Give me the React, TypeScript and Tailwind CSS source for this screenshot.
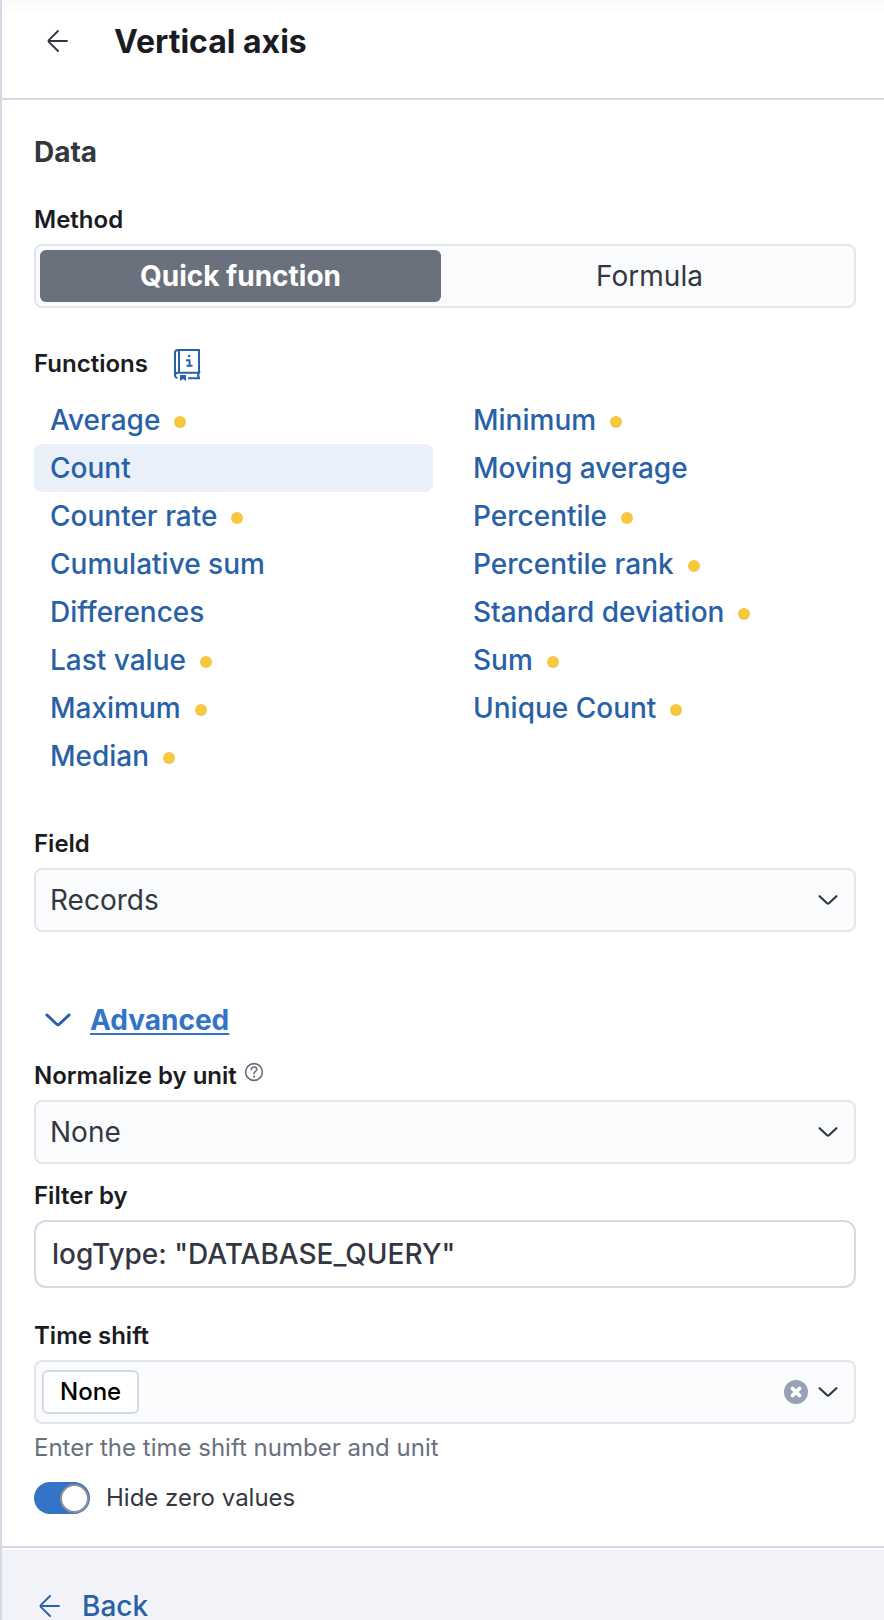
import { useState } from 'react';
import type { ReactNode } from 'react';

type FunctionItem = { name: string; dot?: boolean };

const leftFunctions: FunctionItem[] = [
  { name: 'Average', dot: true },
  { name: 'Count' },
  { name: 'Counter rate', dot: true },
  { name: 'Cumulative sum' },
  { name: 'Differences' },
  { name: 'Last value', dot: true },
  { name: 'Maximum', dot: true },
  { name: 'Median', dot: true },
];

const rightFunctions: FunctionItem[] = [
  { name: 'Minimum', dot: true },
  { name: 'Moving average' },
  { name: 'Percentile', dot: true },
  { name: 'Percentile rank', dot: true },
  { name: 'Standard deviation', dot: true },
  { name: 'Sum', dot: true },
  { name: 'Unique Count', dot: true },
];

function ArrowLeft() {
  return (
    <svg className="size-8 shrink-0" viewBox="0 0 32 32" fill="none" stroke="currentColor" strokeWidth="1.9" strokeLinecap="round" aria-hidden="true">
      <path d="M25 16H7M16 6l-9.2 9.2a1.2 1.2 0 0 0 0 1.6L16 26" />
    </svg>
  );
}

function ChevronDown({ className }: { className: string }) {
  return (
    <svg className={className} viewBox="0 0 24 24" fill="none" stroke="currentColor" strokeWidth="2.2" strokeLinecap="round" aria-hidden="true">
      <path d="M3.6 8.2l7.5 7a1.3 1.3 0 0 0 1.8 0l7.5-7" />
    </svg>
  );
}

function BookIcon() {
  return (
    <svg className="size-8 overflow-visible" viewBox="0 0 32 32" fill="none" stroke="currentColor" strokeWidth="2" aria-hidden="true">
      <path d="M27 25V2H6a3 3 0 0 0-3 3v22.500a3 3 0 0 0 2.500 2.600M7 2v22M3 27.500a3 3 0 0 1 3-2.700h21c-1.200 1.800-1.200 3.600 0 5.400M16 30.200h12" />
      <path d="M8 27h6v6l-3-2-3 2z" fill="currentColor" stroke="none" />
      <path d="M14 12.200h3.500v6M14.500 17.800h6" />
      <path d="M16 7h2.200v2h-2.200z" fill="currentColor" stroke="none" />
    </svg>
  );
}

function QuestionIcon() {
  return (
    <svg className="size-5" viewBox="0 0 20 20" fill="none" stroke="currentColor" strokeWidth="1.6" aria-hidden="true">
      <circle cx="10" cy="10" r="8.400" />
      <path d="M7.300 7.700C7.300 6 8.500 5 10 5s2.800 1 2.800 2.400c0 2-2.800 2.200-2.800 4.300" strokeLinecap="round" />
      <circle cx="10" cy="14.600" r="1.100" fill="currentColor" stroke="none" />
    </svg>
  );
}

function ClearIcon() {
  return (
    <svg className="size-6" viewBox="0 0 24 24" aria-hidden="true">
      <circle cx="12" cy="12" r="12" fill="#98a2b3" />
      <path d="M8.500 8.500l7 7M15.500 8.500l-7 7" stroke="#fff" strokeWidth="3.800" strokeLinecap="round" />
    </svg>
  );
}

function FieldLabel({ htmlFor, children }: { htmlFor: string; children: ReactNode }) {
  return (
    <label htmlFor={htmlFor} className="block text-2xl leading-8 font-semibold text-[#1a1c21]">
      {children}
    </label>
  );
}

function SelectBox({ id, options }: { id: string; options: string[] }) {
  return (
    <div className="relative mt-2">
      <select id={id} className="block h-16 w-full appearance-none rounded-lg border-2 border-[#e3e5ea] bg-[#fafbfd] pr-16 pl-3.5 text-[28px] text-[#343741]">
        {options.map((option) => (
          <option key={option}>{option}</option>
        ))}
      </select>
      <ChevronDown className="pointer-events-none absolute top-5 right-4 size-6 text-[#343741]" />
    </div>
  );
}

function FunctionList({ items, selected, onSelect }: { items: FunctionItem[]; selected: string; onSelect: (name: string) => void }) {
  return (
    <ul>
      {items.map(({ name, dot }) => (
        <li key={name}>
          <button
            type="button"
            aria-pressed={name === selected}
            onClick={() => onSelect(name)}
            className={
              name === selected
                ? 'flex h-12 w-full items-center gap-3.5 rounded-lg bg-[#e9f0f9] px-4 text-[28px] font-medium text-[#2961a6]'
                : 'flex h-12 w-full items-center gap-3.5 rounded-lg px-4 text-[28px] font-medium text-[#2961a6]'
            }
          >
            {name}
            {dot && <span className="mt-1 size-3 rounded-full bg-[#f6c840]" />}
          </button>
        </li>
      ))}
    </ul>
  );
}

export default function App() {
  const [method, setMethod] = useState('Quick function');
  const [selected, setSelected] = useState('Count');
  const [filter, setFilter] = useState('logType: "DATABASE_QUERY"');
  const [hideZero, setHideZero] = useState(true);

  return (
    <div className="flex min-h-screen flex-col border-l-2 border-[#d3dae6] bg-white font-['Inter',sans-serif] text-[#343741]">
      <header className="flex h-[100px] items-start gap-10 border-b-2 border-[#d3dae6] bg-linear-to-b from-[#fafafa] to-white to-15% pt-[22px] pl-10">
        <button type="button" aria-label="Back to visualization" className="mt-[3px]">
          <ArrowLeft />
        </button>
        <h1 className="text-[32px] leading-10 font-bold text-[#1a1c21]">Vertical axis</h1>
      </header>

      <main className="flex-1 pt-8 pr-7 pb-8 pl-8">
        <h2 className="text-[28px] leading-10 font-bold">Data</h2>

        <fieldset className="mt-8">
          <legend className="text-2xl leading-8 font-semibold text-[#1a1c21]">Method</legend>
          <div className="mt-2 grid h-16 grid-cols-2 gap-2 rounded-lg border-2 border-[#e3e5ea] bg-[#fafbfd] p-1">
            {['Quick function', 'Formula'].map((name) => (
              <button
                key={name}
                type="button"
                aria-pressed={name === method}
                onClick={() => setMethod(name)}
                className={
                  name === method
                    ? 'rounded-md bg-[#6b707d] text-[28px] leading-8 font-bold text-white'
                    : 'rounded-md text-[28px] leading-8'
                }
              >
                {name}
              </button>
            ))}
          </div>
        </fieldset>

        <section className="mt-10">
          <div className="flex items-center gap-6">
            <h3 className="text-2xl leading-8 font-semibold text-[#1a1c21]">Functions</h3>
            <button type="button" aria-label="Function reference" className="text-[#2961a6]">
              <BookIcon />
            </button>
          </div>
          <div className="mt-4 grid grid-cols-2 gap-6">
            <FunctionList items={leftFunctions} selected={selected} onSelect={setSelected} />
            <FunctionList items={rightFunctions} selected={selected} onSelect={setSelected} />
          </div>
        </section>

        <div className="mt-12">
          <FieldLabel htmlFor="field">Field</FieldLabel>
          <SelectBox id="field" options={['Records']} />
        </div>

        <button type="button" aria-expanded="true" className="mt-16 ml-2 flex h-12 items-center gap-4">
          <ChevronDown className="size-8 text-[#2961a6]" />
          <span className="text-[28px] leading-10 font-bold text-[#3374c9] underline decoration-2 underline-offset-3">Advanced</span>
        </button>

        <div className="mt-4">
          <div className="flex gap-[7px]">
            <FieldLabel htmlFor="normalize">Normalize by unit</FieldLabel>
            <button type="button" aria-label="About normalizing" className="mt-0.5 h-5 text-[#69707d]">
              <QuestionIcon />
            </button>
          </div>
          <SelectBox id="normalize" options={['None']} />
        </div>

        <div className="mt-4">
          <FieldLabel htmlFor="filter">Filter by</FieldLabel>
          <input
            id="filter"
            type="text"
            value={filter}
            onChange={(event) => setFilter(event.target.value)}
            className="mt-2 block h-[68px] w-full rounded-xl border-2 border-[#d3dae6] bg-white px-4 text-[28px] font-medium"
          />
        </div>

        <div className="mt-8">
          <FieldLabel htmlFor="shift">Time shift</FieldLabel>
          <div className="mt-2 flex h-16 items-center rounded-lg border-2 border-[#e3e5ea] bg-[#fafbfd] pr-3.5 pl-1.5">
            <span className="flex h-11 items-center rounded-md border-2 border-[#d3dae6] bg-white px-4 text-2xl font-medium text-black">None</span>
            <input id="shift" type="text" className="min-w-0 flex-1 bg-transparent px-2 text-2xl outline-none" />
            <button type="button" aria-label="Clear time shift">
              <ClearIcon />
            </button>
            <button type="button" aria-label="Open time shift options" className="ml-2">
              <ChevronDown className="size-6" />
            </button>
          </div>
          <p className="mt-2 text-2xl leading-8 text-[#69707d]">Enter the time shift number and unit</p>
        </div>

        <label className="mt-[18px] flex items-center gap-4 text-2xl leading-8">
          <input
            type="checkbox"
            role="switch"
            checked={hideZero}
            onChange={(event) => setHideZero(event.target.checked)}
            className="peer sr-only"
          />
          <span className="flex h-8 w-14 items-center justify-start rounded-full bg-[#98a2b3] px-px peer-checked:justify-end peer-checked:bg-[#3374c9]">
            <span className="size-[29px] rounded-full border-2 border-[#8f8f8f] bg-white" />
          </span>
          Hide zero values
        </label>
      </main>

      <footer className="border-t-2 border-[#d3dae6] pt-0.5">
        <div className="bg-[#f2f3f9] pt-[42px] pl-8">
          <button type="button" className="flex h-7 items-center gap-4 text-[28px] leading-7 font-medium text-[#2961a6]">
            <ArrowLeft />
            Back
          </button>
        </div>
      </footer>
    </div>
  );
}
